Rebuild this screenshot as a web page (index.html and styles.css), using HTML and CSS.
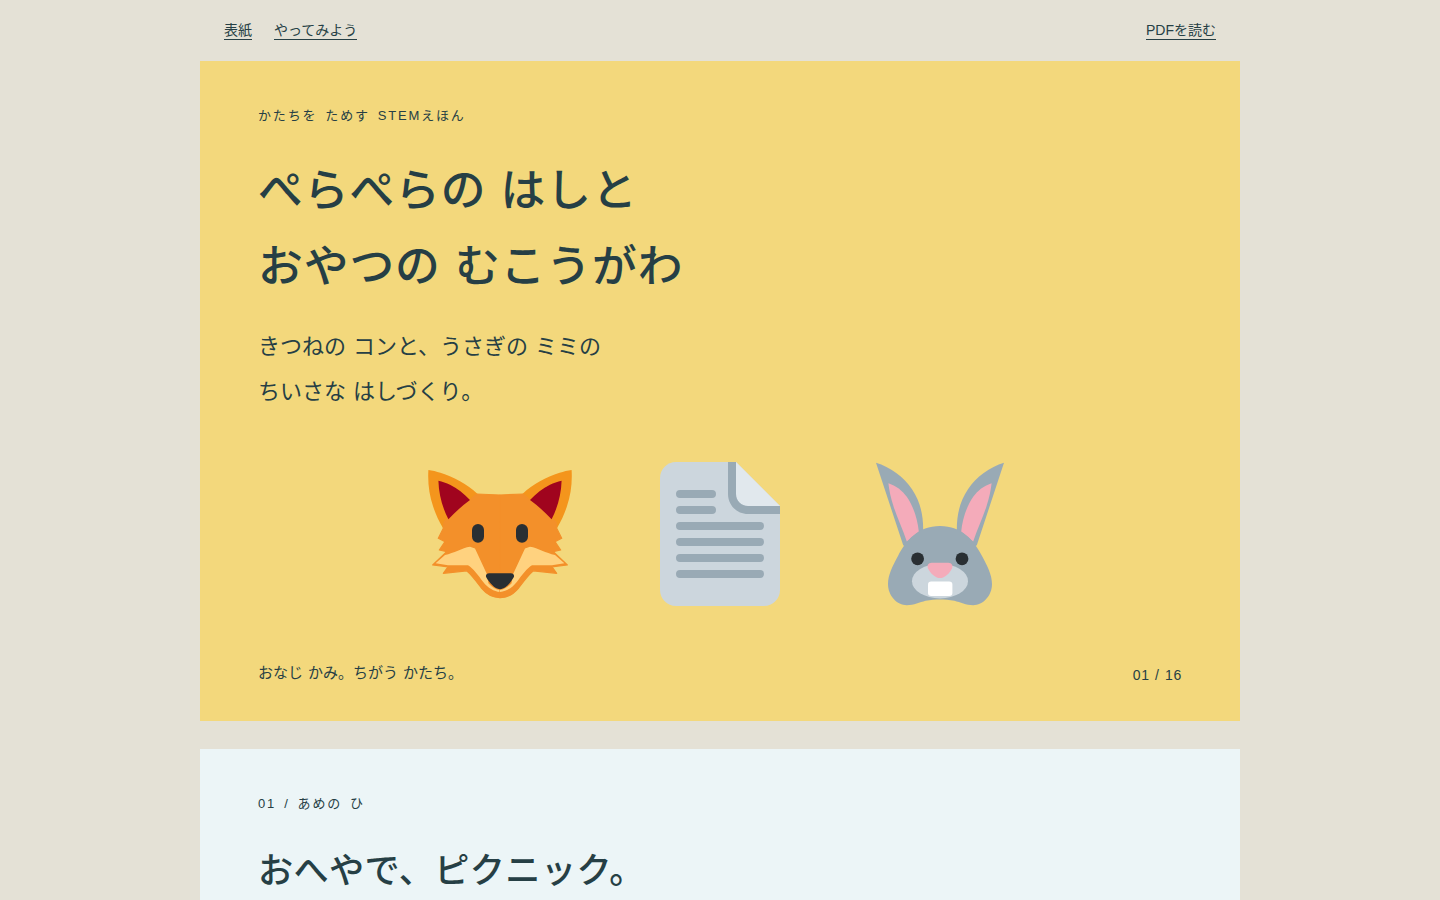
FILE: index.html
```html
<!DOCTYPE html>
<html lang="ja">
<head>
  <meta charset="UTF-8">
  <title>ぺらぺらの はしと おやつの むこうがわ</title>
  <link rel="stylesheet" href="styles.css">
</head>
<body>
  <div class="book">
    <!-- Top links -->
    <nav class="topnav">
      <div class="topnav-left">
        <a href="#cover">表紙</a>
        <a href="#try">やってみよう</a>
      </div>
      <a href="#pdf">PDFを読む</a>
    </nav>

    <!-- Cover -->
    <section class="page cover" id="cover">
      <p class="eyebrow">かたちを ためす STEMえほん</p>
      <h1>ぺらぺらの はしと<br>おやつの むこうがわ</h1>
      <p class="lead">きつねの コンと、うさぎの ミミの<br>ちいさな はしづくり。</p>
      <div class="characters">
        <svg class="emoji" viewBox="0 0 36 36" aria-label="きつね">
          <g id="fox-half">
            <path fill="#F4951C" d="M.1 2c1 .1 2 .4 3 .7 3.400 1.100 6.600 2.800 9.300 5.300L10 17 3.800 16.600C2.700 14.800 1.900 13 1.300 11.200.3 8.200-.1 5.100.1 2z"/>
            <path fill="#F3902A" stroke="#F3902A" stroke-width=".3" stroke-linejoin="round" d="M18 8.250L12.200 8 4 15l-.17 1.580L2.580 19.080 4.250 19.920 2.830 22 4.670 22.400 1.170 25.750 5 26.200 3.830 27.830 9.670 27.200C11 28.300 12.200 30 13.420 31.600 14.600 33 16 33.900 18 33.900z"/>
            <path fill="#A0041E" d="M2.600 4.700c1 .2 2 .6 2.900 1 1.800.9 3.500 2.200 5 3.800-1.900 1.400-3.700 3-5.400 4.800C3.600 11.400 2.700 8.200 2.600 4.700z"/>
            <path fill="#FFD27F" d="M1.900 25.300L4.250 23.250C6.500 22.800 8.500 21.500 10.500 21.200L11.750 21.600 14.830 28.250 15.100 30.300C16 31.300 17 31.900 18 32V32.500C16.500 32.400 15 31.500 13.800 30 12.500 28.200 11.300 26.600 10 25.800L5 25.800z"/>
          </g>
          <use href="#fox-half" transform="matrix(-1 0 0 1 36 0)"/>
          <rect fill="#292F33" x="11" y="15.500" width="3" height="4.700" rx="1.500"/>
          <rect fill="#292F33" x="22" y="15.500" width="3" height="4.700" rx="1.500"/>
          <path fill="#292F33" d="M15.300 27.800h5.400c.7 0 1 .6.700 1.100-.7 1.200-2 2.900-3.400 2.900s-2.700-1.700-3.400-2.900c-.3-.5 0-1.100.7-1.100z"/>
        </svg>
        <svg class="emoji" viewBox="0 0 36 36" aria-label="かみ">
          <path fill="#CCD6DD" d="M33 32c0 2.200-1.800 4-4 4H7c-2.200 0-4-1.800-4-4V4c0-2.200 1.800-4 4-4h15l11 11v21z"/>
          <path fill="#E1E8ED" d="M22 0l11 11H25c-1.700 0-3-1.300-3-3V0z"/>
          <path fill="#99AAB5" d="M20 0v8c0 2.800 2.200 5 5 5h8v-2h-8c-1.700 0-3-1.300-3-3V0h-2z"/>
          <path fill="#99AAB5" d="M8 7h8a1 1 0 010 2H8a1 1 0 010-2zm0 4h8a1 1 0 010 2H8a1 1 0 010-2zm0 4h20a1 1 0 010 2H8a1 1 0 010-2zm0 4h20a1 1 0 010 2H8a1 1 0 010-2zm0 4h20a1 1 0 010 2H8a1 1 0 010-2zm0 4h20a1 1 0 010 2H8a1 1 0 010-2z"/>
        </svg>
        <svg class="emoji" viewBox="0 0 36 36" aria-label="うさぎ">
          <g id="rabbit-ear">
            <path fill="#99AAB5" d="M2 .2C5.500 1.200 9 3.800 11 6.800c2 3 2.800 6.200 2.800 10.200L10 21.500l-1.200-.7z"/>
            <path fill="#F4ABBA" d="M5.100 5.300C7.200 6 8.600 7.200 9.700 8.700c1.600 2.300 2.700 5.500 3 8.700l-3 2.500C8.600 16.500 7.100 13.500 6.300 10.800 5.700 9 5.300 7.100 5.100 5.300z"/>
          </g>
          <use href="#rabbit-ear" transform="matrix(-1 0 0 1 36 0)"/>
          <path fill="#99AAB5" d="M18 16c5.500 0 8.500 3.600 10.500 7.500 1.400 2.600 2.500 4.800 2.500 7 0 3-2.300 5.300-4.700 5.300-1.800 0-3.200-.7-4.700-1.100-1.300-.2-2.400-.3-3.600-.3s-2.300.1-3.600.3c-1.500.4-2.900 1.100-4.700 1.100C7.300 35.800 5 33.500 5 30.500c0-2.200 1.100-4.400 2.500-7C9.500 19.600 12.500 16 18 16z"/>
          <ellipse fill="#CCD6DD" cx="18" cy="29.800" rx="7" ry="4.300"/>
          <circle fill="#292F33" cx="12.400" cy="24.200" r="1.600"/>
          <circle fill="#292F33" cx="23.500" cy="24.200" r="1.600"/>
          <path fill="#F4ABBA" d="M15.900 25.200h4.200c.8 0 1.200.7.900 1.400-.6 1.200-1.800 2.400-3 2.400s-2.400-1.200-3-2.400c-.3-.7.1-1.400.9-1.400z"/>
          <rect fill="#FFFFFF" x="15" y="29.900" width="6.100" height="3.600" rx=".8"/>
        </svg>
      </div>
      <div class="page-foot">
        <p class="caption">おなじ かみ。ちがう かたち。</p>
        <span class="pagenum">01 / 16</span>
      </div>
    </section>

    <!-- Page 01 -->
    <section class="page sky" id="try">
      <p class="eyebrow">01 / あめの ひ</p>
      <h2>おへやで、ピクニック。</h2>
    </section>
  </div>
</body>
</html>
```

FILE: styles.css
```css
html, body {
  margin: 0;
  padding: 0;
  height: 100vh;
  overflow: hidden;
}
body {
  background-color: #e4e1d6;
  color: #263f45;
  font-family: "Liberation Sans", "Noto Sans CJK JP", sans-serif;
  word-spacing: 0.05em;
}
.book {
  width: 1040px;
  margin: 0 auto;
  display: flex;
  flex-direction: column;
  gap: 28px;
}
.topnav {
  height: 60px;
  margin-bottom: -27px;
  padding: 0 24px;
  display: flex;
  justify-content: space-between;
  align-items: center;
  font-size: 14px;
}
.topnav-left {
  display: flex;
  gap: 22px;
}
.topnav a {
  color: #263f45;
  text-decoration: none;
  border-bottom: 1px solid #263f45;
  line-height: 18px;
}
.page {
  padding: 45px 58px 0;
  box-sizing: border-box;
  height: 660px;
  flex-shrink: 0;
}
.cover {
  background-color: #f3d87c;
  display: flex;
  flex-direction: column;
}
.sky {
  background-color: #ecf5f7;
}
.eyebrow {
  margin: 0;
  font-size: 13px;
  line-height: 20px;
  letter-spacing: 0.14em;
  word-spacing: 0.2em;
}
h1 {
  margin: 26px 0 0;
  font-size: 44.8px;
  font-weight: 500;
  line-height: 76px;
  letter-spacing: 0.02em;
}
h2 {
  margin: 29px 0 0;
  font-size: 35.2px;
  font-weight: 500;
  line-height: 56px;
  letter-spacing: 0.01em;
}
.lead {
  margin: 20px 0 0;
  font-size: 22px;
  line-height: 45px;
}
.characters {
  margin-top: 48px;
  display: flex;
  justify-content: center;
  gap: 76px;
}
.emoji {
  width: 144px;
  height: 144px;
}
.page-foot {
  margin-top: 55px;
  display: flex;
  justify-content: space-between;
  align-items: flex-end;
}
.caption {
  margin: 0;
  font-size: 15px;
  line-height: 24px;
}
.pagenum {
  font-size: 14px;
  letter-spacing: 0.05em;
  line-height: 22px;
  margin-bottom: -1px;
}
```
